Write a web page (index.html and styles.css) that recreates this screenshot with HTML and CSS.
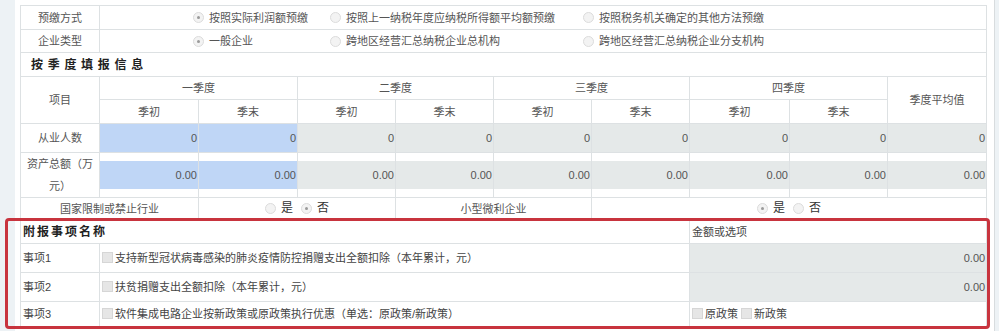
FILE: index.html
```html
<!DOCTYPE html>
<html lang="zh-CN">
<head>
<meta charset="UTF-8">
<title>企业所得税预缴申报</title>
<link rel="stylesheet" href="styles.css">
</head>
<body>
<div class="page">
  <table class="grid">
    <colgroup>
      <col class="w79"><col class="w99"><col class="w99"><col class="w98"><col class="w98">
      <col class="w98"><col class="w98"><col class="w100"><col class="w98"><col class="w99">
    </colgroup>
    <tr class="h24">
      <td class="lbl">预缴方式</td>
      <td colspan="9">
        <div class="opts">
          <span class="opt o1"><i class="radio on"></i>按照实际利润额预缴</span>
          <span class="opt o2"><i class="radio"></i>按照上一纳税年度应纳税所得额平均额预缴</span>
          <span class="opt"><i class="radio"></i>按照税务机关确定的其他方法预缴</span>
        </div>
      </td>
    </tr>
    <tr class="h23">
      <td class="lbl">企业类型</td>
      <td colspan="9">
        <div class="opts">
          <span class="opt o1"><i class="radio on"></i>一般企业</span>
          <span class="opt o2"><i class="radio"></i>跨地区经营汇总纳税企业总机构</span>
          <span class="opt"><i class="radio"></i>跨地区经营汇总纳税企业分支机构</span>
        </div>
      </td>
    </tr>
    <tr class="h24">
      <td colspan="10" class="title wide">按季度填报信息</td>
    </tr>
    <tr class="h23">
      <td rowspan="2" class="lbl">项目</td>
      <td colspan="2" class="lbl">一季度</td>
      <td colspan="2" class="lbl">二季度</td>
      <td colspan="2" class="lbl">三季度</td>
      <td colspan="2" class="lbl">四季度</td>
      <td rowspan="2" class="lbl">季度平均值</td>
    </tr>
    <tr class="h24">
      <td class="lbl">季初</td><td class="lbl">季末</td>
      <td class="lbl">季初</td><td class="lbl">季末</td>
      <td class="lbl">季初</td><td class="lbl">季末</td>
      <td class="lbl">季初</td><td class="lbl">季末</td>
    </tr>
    <tr class="h29">
      <td class="lbl">从业人数</td>
      <td class="cell"><span class="inp edit">0</span></td>
      <td class="cell"><span class="inp edit">0</span></td>
      <td class="cell"><span class="inp">0</span></td>
      <td class="cell"><span class="inp">0</span></td>
      <td class="cell"><span class="inp">0</span></td>
      <td class="cell"><span class="inp">0</span></td>
      <td class="cell"><span class="inp">0</span></td>
      <td class="cell"><span class="inp">0</span></td>
      <td class="cell"><span class="inp">0</span></td>
    </tr>
    <tr class="h45">
      <td class="lbl two">资产总额（万元）</td>
      <td class="cell"><span class="inp edit">0.00</span></td>
      <td class="cell"><span class="inp edit">0.00</span></td>
      <td class="cell"><span class="inp">0.00</span></td>
      <td class="cell"><span class="inp">0.00</span></td>
      <td class="cell"><span class="inp">0.00</span></td>
      <td class="cell"><span class="inp">0.00</span></td>
      <td class="cell"><span class="inp">0.00</span></td>
      <td class="cell"><span class="inp">0.00</span></td>
      <td class="cell"><span class="inp">0.00</span></td>
    </tr>
    <tr class="h23">
      <td colspan="2" class="lbl">国家限制或禁止行业</td>
      <td colspan="2" class="lbl">
        <span class="yn"><i class="radio"></i>是</span><span class="yn"><i class="radio on"></i>否</span>
      </td>
      <td colspan="2" class="lbl">小型微利企业</td>
      <td colspan="4" class="lbl">
        <span class="yn"><i class="radio on"></i>是</span><span class="yn"><i class="radio"></i>否</span>
      </td>
    </tr>
    <tr class="h23">
      <td colspan="7" class="title">附报事项名称</td>
      <td colspan="3" class="txt">金额或选项</td>
    </tr>
    <tr class="h29">
      <td class="txt">事项1</td>
      <td colspan="6" class="txt"><i class="box"></i>支持新型冠状病毒感染的肺炎疫情防控捐赠支出全额扣除（本年累计，元）</td>
      <td colspan="3" class="cell"><span class="inp">0.00</span></td>
    </tr>
    <tr class="h29">
      <td class="txt">事项2</td>
      <td colspan="6" class="txt"><i class="box"></i>扶贫捐赠支出全额扣除（本年累计，元）</td>
      <td colspan="3" class="cell"><span class="inp">0.00</span></td>
    </tr>
    <tr class="h25">
      <td class="txt">事项3</td>
      <td colspan="6" class="txt"><i class="box"></i>软件集成电路企业按新政策或原政策执行优惠（单选：原政策/新政策）</td>
      <td colspan="3" class="txt"><i class="box"></i>原政策<i class="box gap"></i>新政策</td>
    </tr>
  </table>
  <div class="mark"></div>
</div>
</body>
</html>
```

FILE: styles.css
```css
/* 申报表截图：表格 + 红框标注 */
body{margin:0;background:#edf2f5;font-family:"Liberation Sans","Noto Sans CJK SC",sans-serif;
     font-size:11px;color:#555;}
.page{position:relative;margin-left:15px;width:980px;height:331px;background:#fff;
      padding:5px 0 0 5px;box-sizing:border-box;border-right:1px solid #d8dcde;}
.grid{width:967px;border-collapse:collapse;table-layout:fixed;}
.grid td{border:1px solid #dde1e3;padding:0;line-height:14px;vertical-align:middle;}
.w79{width:79px;}.w98{width:98px;}.w99{width:99px;}.w100{width:100px;}
.h23{height:23px;}.h24{height:24px;}.h25{height:25px;}.h29{height:29px;}.h45{height:45px;}
.lbl{text-align:center;}
.lbl.two{line-height:22px;padding:0 3px;}
.txt{padding-left:2px !important;color:#444;}
.title{font-weight:bold;font-size:12px;color:#222;letter-spacing:2px;padding-left:2px !important;}
.title.wide{letter-spacing:4.7px;padding-left:10px !important;}
.opts{display:flex;align-items:center;padding-left:93px;}
.opt{display:flex;align-items:center;}
.o1{width:137px;}.o2{width:253px;}
.radio{display:inline-block;width:9px;height:9px;border-radius:50%;border:1px solid #dcdcdc;
       background:#f3f3f3;margin-right:5px;position:relative;vertical-align:-1px;}
.radio.on::after{content:"";position:absolute;left:3px;top:3px;width:3px;height:3px;border-radius:50%;
       background:#9a9a9a;}
.yn{display:inline-flex;align-items:center;margin:0 4px;font-size:12px;color:#333;}
.cell{text-align:right;}
.inp{display:block;height:28px;line-height:28px;background:#e5e9e9;padding-right:1px;color:#555;}
.inp.edit{background:#bfd6f6;}
.box{display:inline-block;width:9px;height:9px;border:1px solid #d6d6d6;background:#e6e6e6;
     margin-right:2px;vertical-align:-1px;}
.box.gap{margin-left:3px;}
.mark{position:absolute;left:-10px;top:218px;width:985px;height:111px;box-sizing:border-box;
      border:3px solid #c8343e;border-radius:4px;}
```
